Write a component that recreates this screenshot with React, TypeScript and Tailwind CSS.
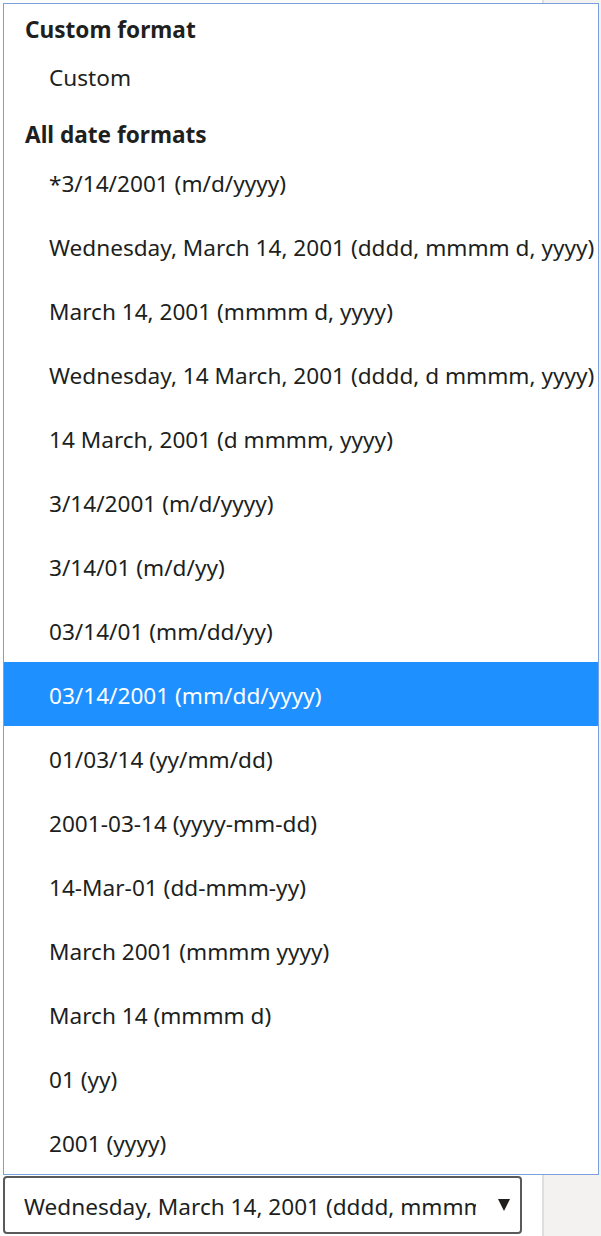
const formats = [
  '*3/14/2001 (m/d/yyyy)',
  'Wednesday, March 14, 2001 (dddd, mmmm d, yyyy)',
  'March 14, 2001 (mmmm d, yyyy)',
  'Wednesday, 14 March, 2001 (dddd, d mmmm, yyyy)',
  '14 March, 2001 (d mmmm, yyyy)',
  '3/14/2001 (m/d/yyyy)',
  '3/14/01 (m/d/yy)',
  '03/14/01 (mm/dd/yy)',
  '03/14/2001 (mm/dd/yyyy)',
  '01/03/14 (yy/mm/dd)',
  '2001-03-14 (yyyy-mm-dd)',
  '14-Mar-01 (dd-mmm-yy)',
  'March 2001 (mmmm yyyy)',
  'March 14 (mmmm d)',
  '01 (yy)',
  '2001 (yyyy)',
]

const selected = '03/14/2001 (mm/dd/yyyy)'

export default function App() {
  return (
    <div className="relative flex w-[601px] h-[1236px] overflow-hidden bg-[#f3f2f1] font-['Noto_Sans','Open_Sans',sans-serif] text-[#201f1e]">
      <div className="flex flex-col justify-end w-[544px] h-full bg-white border-r-2 border-[#e1dfdd]">
        <div className="pl-[3px] pb-[2px]">
          <button className="flex items-center justify-between w-[519px] h-[58px] pl-[19px] pr-[10px] bg-white border-2 border-[#5a5a5a] rounded-[4px] text-[22.6px]">
            <span className="w-[452px] pt-[3px] overflow-hidden whitespace-nowrap text-left">
              Wednesday, March 14, 2001 (dddd, mmmm d, yyyy)
            </span>
            <svg width="12" height="12" viewBox="0 0 12 12" className="fill-[#201f1e]">
              <path d="M0 0h12L6 12z" />
            </svg>
          </button>
        </div>
      </div>

      <div className="absolute left-[3px] top-[3px] w-[596px] h-[1172px] overflow-hidden bg-white border border-[#7aa0dd]">
        <div className="flex items-center h-[51px] pl-[21px] text-[22.6px] font-bold">Custom format</div>
        <div className="flex items-center h-[46px] pl-[45px] text-[22.6px]">Custom</div>
        <div className="flex items-center h-[49px] pl-[21px] pt-[18px] text-[22.6px] font-bold">All date formats</div>
        {formats.map((f) => (
          <div
            key={f}
            className={
              f === selected
                ? 'flex items-center h-[64px] pl-[45px] pt-[4px] whitespace-nowrap text-[22.6px] bg-[#1e90ff] text-white'
                : 'flex items-center h-[64px] pl-[45px] pt-[4px] whitespace-nowrap text-[22.6px]'
            }
          >
            {f}
          </div>
        ))}
      </div>
    </div>
  )
}
